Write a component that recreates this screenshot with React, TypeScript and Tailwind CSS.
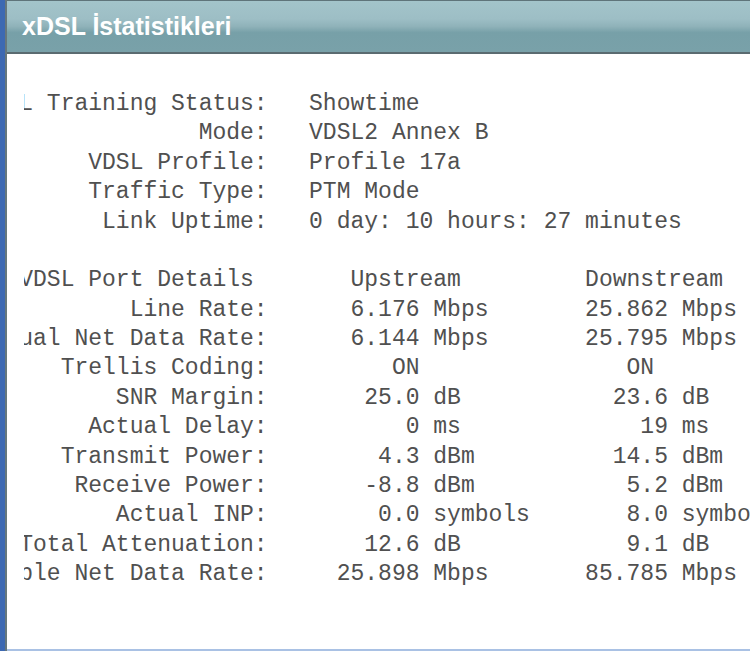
import React from "react";

type Seg = [number, string];

const ORIGIN = -4;

function buildLine(segs: Seg[]): string {
  let s = "";
  for (const [col, text] of segs) {
    const idx = col - ORIGIN;
    while (s.length < idx) s += " ";
    s += text;
  }
  return s;
}

const rows: Seg[][] = [
  [[0, "VDSL Training Status:"], [24, "Showtime"]],
  [[16, "Mode:"], [24, "VDSL2 Annex B"]],
  [[8, "VDSL Profile:"], [24, "Profile 17a"]],
  [[8, "Traffic Type:"], [24, "PTM Mode"]],
  [[9, "Link Uptime:"], [24, "0 day: 10 hours: 27 minutes"]],
  [],
  [[3, "VDSL Port Details"], [27, "Upstream"], [44, "Downstream"]],
  [[11, "Line Rate:"], [27, "6.176 Mbps"], [44, "25.862 Mbps"]],
  [[0, "Actual Net Data Rate:"], [27, "6.144 Mbps"], [44, "25.795 Mbps"]],
  [[6, "Trellis Coding:"], [30, "ON"], [47, "ON"]],
  [[10, "SNR Margin:"], [28, "25.0 dB"], [46, "23.6 dB"]],
  [[8, "Actual Delay:"], [31, "0 ms"], [48, "19 ms"]],
  [[6, "Transmit Power:"], [29, "4.3 dBm"], [46, "14.5 dBm"]],
  [[7, "Receive Power:"], [28, "-8.8 dBm"], [47, "5.2 dBm"]],
  [[10, "Actual INP:"], [29, "0.0 symbols"], [47, "8.0 symbols"]],
  [[3, "Total Attenuation:"], [28, "12.6 dB"], [47, "9.1 dB"]],
  [[-4, "Attainable Net Data Rate:"], [26, "25.898 Mbps"], [44, "85.785 Mbps"]],
];

export default function App() {
  const text = rows.map(buildLine).join("\n");
  return (
    <div className="flex h-[651px] w-[750px] overflow-hidden bg-white">
      <div className="w-[5px] shrink-0 bg-[#3d69b2]" />
      <div className="flex min-w-0 flex-1 flex-col border-l-2 border-[#66777d]">
        <div className="flex h-[54px] shrink-0 items-center border-t border-b-2 border-t-[#5f747a] border-b-[#5a6b70] bg-[linear-gradient(to_bottom,#a3c4ca_0%,#9dbec5_35%,#8fb2b9_50%,#77a0a8_62%,#79a1a9_100%)] pl-[15px]">
          <h1 className="font-['Liberation_Sans',Arial,sans-serif] text-[25px] leading-none font-bold text-white">
            xDSL İstatistikleri
          </h1>
        </div>
        <div className="min-h-0 flex-1 pt-[36px] pl-[17px]">
          <div className="overflow-hidden">
            <pre className="ml-[-101.4px] font-['Liberation_Mono','Courier_New',monospace] text-[23px] leading-[29.375px] text-[#505050]">
              {text}
            </pre>
          </div>
        </div>
        <div className="h-[2px] shrink-0 bg-[#a9c1e4]" />
      </div>
    </div>
  );
}
